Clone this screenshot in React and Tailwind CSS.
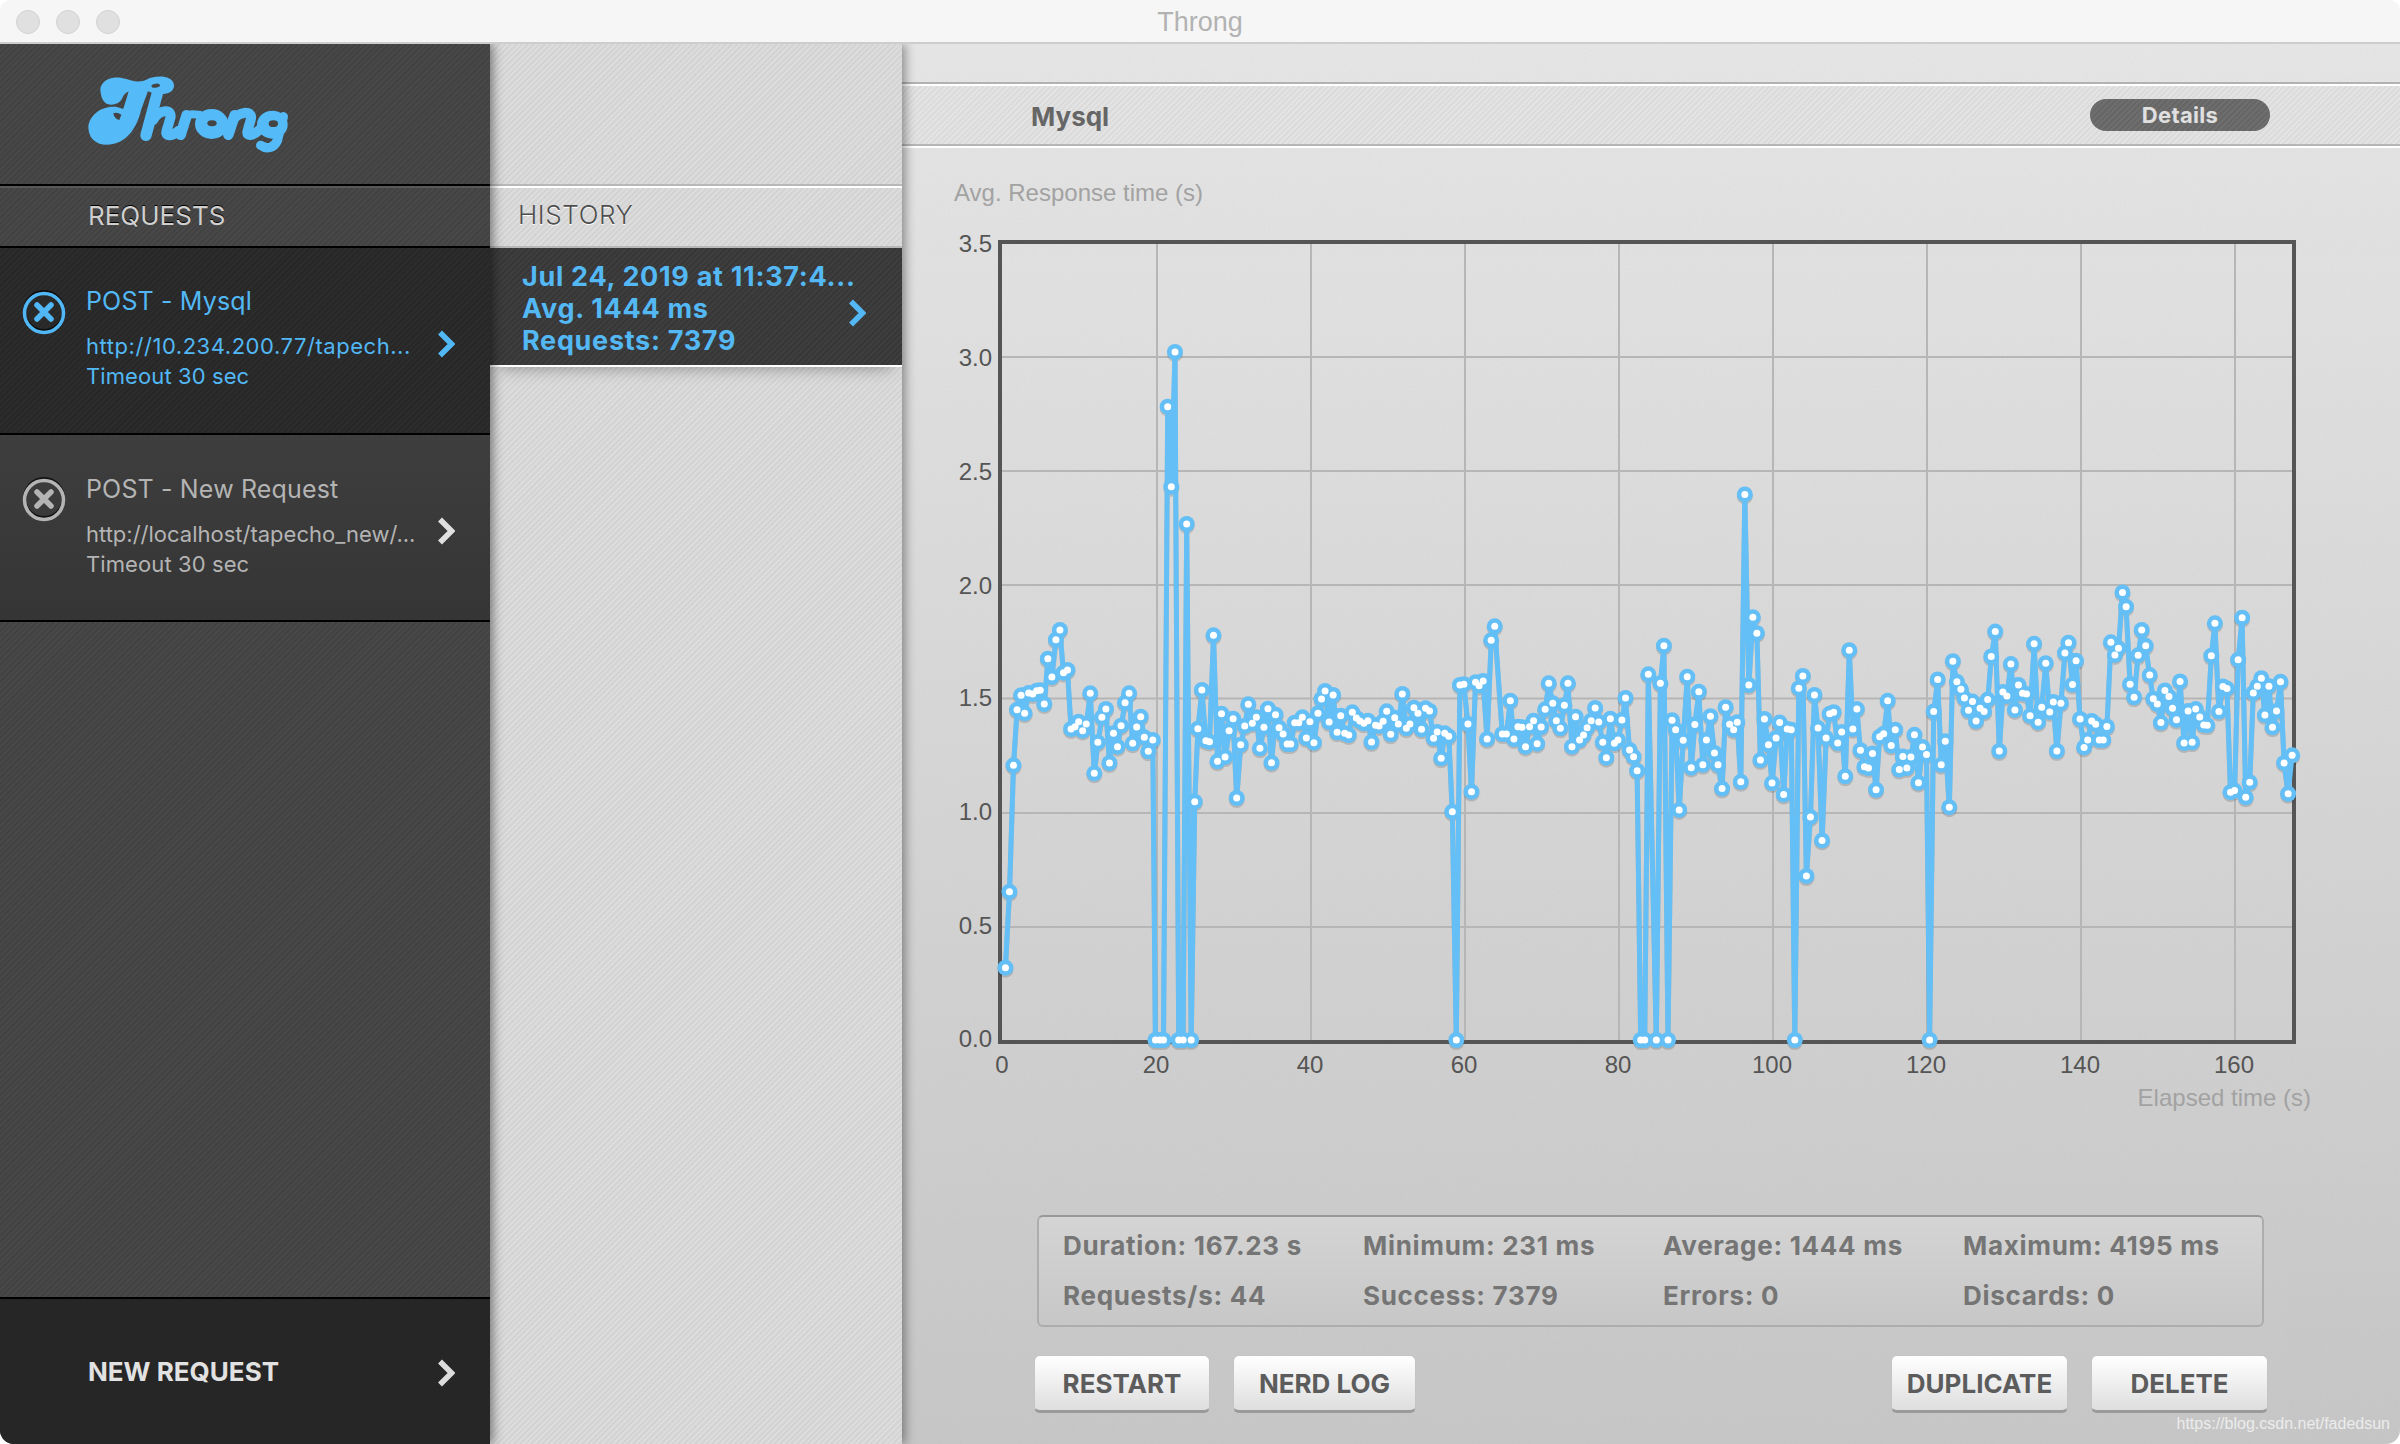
import React from "react";

const z4a = [[57,1043],[66,815],[75,436],[83,269],[92,226],[100,280],[109,219],[118,222],[127,212],[135,211],[144,252],[152,116],[161,171],[170,59],[179,30],[187,158],[196,150],[204,327],[213,320],[221,305],[230,332],[238,312],[247,220],[256,460],[264,367],[273,292],[282,267],[290,429],[299,340],[308,380],[316,317],[325,248],[334,220],[342,370],[351,321],[360,290],[368,352],[377,394],[387,360],[393,1260],[403,1260],[411,1260]];
const z4b = [[445,1260],[455,1260],[463,-288],[473,1260],[481,545],[488,326],[497,210],[506,362],[514,365],[523,46],[532,424],[541,281],[549,411],[558,332],[567,296],[575,534],[584,374],[593,318],[601,253],[610,310],[619,292],[627,385],[636,322],[645,266],[653,428],[662,284],[670,323],[679,342],[688,372],[696,372],[705,308],[714,308],[722,292],[731,354],[739,305],[748,368],[757,280],[765,237],[773,213],[782,306],[791,225],[800,337],[808,287],[817,340],[826,345],[834,277],[843,294],[851,303],[860,310],[869,302],[877,366],[886,316],[894,318],[903,304],[911,274],[920,343],[929,293],[937,312],[946,222],[955,325],[963,312],[972,263],[981,280],[989,328],[998,265],[1007,273],[1016,355],[1024,336],[1033,415],[1041,340],[1050,349],[1058,575],[1067,1260],[1075,195],[1084,193],[1093,312],[1101,515],[1110,187],[1118,197],[1127,183],[1136,357],[1145,61],[1153,19],[1170,342],[1179,342],[1188,242],[1196,357],[1205,320],[1214,322],[1222,380],[1231,320],[1240,302],[1248,371],[1257,321],[1266,268],[1274,190],[1283,250],[1291,302],[1300,325],[1309,256],[1317,190],[1326,380],[1334,290],[1343,360],[1352,345],[1360,323],[1369,302],[1378,264],[1386,306],[1395,367],[1403,413],[1412,296],[1421,370],[1429,360],[1438,300],[1446,234],[1455,390],[1464,410],[1472,452],[1480,1260],[1489,1260],[1497,163],[1515,1260],[1524,190],[1532,77]];
const z5 = [[18,1467],[27,658],[35,682],[43,885],[52,709],[61,548],[70,778],[78,669],[87,586],[96,771],[104,708],[113,648],[122,741],[130,771],[139,831],[147,625],[156,668],[165,682],[173,663],[181,814],[190,87],[199,569],[208,398],[217,438],[225,759],[234,655],[243,720],[251,817],[260,703],[268,664],[277,846],[285,680],[294,682],[302,1467],[311,577],[320,546],[328,1052],[337,903],[346,594],[354,678],[363,962],[372,703],[380,642],[389,638],[398,716],[407,688],[415,800],[424,481],[432,680],[441,630],[449,734],[458,776],[467,779],[476,742],[484,834],[492,700],[501,692],[510,609],[518,722],[527,682],[536,783],[544,750],[553,779],[562,751],[570,695],[579,816],[588,726],[597,745],[604,1467],[613,636],[622,555],[630,771],[639,711],[648,878],[656,509],[665,561],[674,580],[682,602],[691,633],[700,611],[708,660],[717,628],[726,636],[734,606],[742,497],[751,434],[760,736],[768,587],[777,597],[786,516],[795,632],[803,569],[812,590],[821,592],[829,647],[838,465],[847,663],[855,625],[864,514],[873,637],[881,612],[889,736],[898,615],[907,488],[915,462],[924,568],[932,508],[941,655],[950,727],[958,708],[967,660],[976,668],[984,708],[993,708],[1001,674],[1010,461],[1019,493],[1027,476],[1036,335],[1044,371],[1053,567],[1062,600],[1071,494],[1079,430],[1088,470],[1097,544],[1105,604],[1114,617],[1122,664],[1131,583],[1140,598],[1148,628],[1157,657],[1165,560],[1174,716],[1183,635],[1192,714],[1200,630],[1209,650],[1218,670],[1226,671],[1235,495],[1243,413],[1252,636],[1261,573],[1270,578],[1278,840],[1287,836],[1295,505],[1304,399],[1312,853],[1321,815],[1329,589],[1338,572],[1347,552],[1355,645],[1364,572],[1372,676],[1381,635],[1390,561],[1398,766],[1407,844],[1416,747]];
const f4 = ([x, y]) => [980 + x / 2.24, 620 + y / 3];
const f5 = ([x, y]) => [1660 + x / 2.24, 460 + y / 2.529];
const pts = [
  ...z4a.map(f4),
  [1167.7, 406.7], [1171.3, 486.7], [1175, 352],
  ...z4b.map(f4),
  ...z5.map(f5),
].map(([x, y]) => (y > 1038 ? [x, 1040] : [x, y]));
const line = pts.map(([x, y]) => `${x.toFixed(1)},${y.toFixed(1)}`).join(" ");

const Chevron = ({ className }) => (
  <svg viewBox="0 0 18 28" className={`w-[18px] h-[28px] shrink-0 ${className}`}>
    <path d="M3 2.5 L14.5 14 L3 25.5" fill="none" stroke="currentColor" strokeWidth="5.5" />
  </svg>
);

const XCircle = ({ className }) => (
  <svg viewBox="0 0 44 46" className={`w-[44px] h-[46px] shrink-0 ${className}`}>
    <circle cx="22" cy="22" r="19.5" fill="none" stroke="#000" strokeWidth="3" opacity=".7" />
    <circle cx="22" cy="24" r="19.5" fill="none" stroke="currentColor" strokeWidth="3.5" />
    <path d="M15 16 L29 30 M29 16 L15 30" stroke="currentColor" strokeWidth="5.5" strokeLinecap="round" />
  </svg>
);

const Logo = () => (
  <svg viewBox="0 0 780 390" className="w-[260px] h-[130px] block" fill="#55baf8" stroke="none">
    <path d="M122 128 C116 96 150 78 185 84 C215 90 235 102 262 88 C285 76 338 74 342 105 C344 134 300 138 270 126 C255 120 240 122 222 122 C205 122 192 128 185 148 C180 158 165 164 155 164 C135 164 125 150 122 128Z" />
    <path d="M85 230 C88 198 120 168 165 170 C172 170 185 176 190 176 L208 118 L266 118 L244 178 C228 245 192 284 140 284 C105 284 85 262 85 230Z" />
    <ellipse cx="287" cy="107" rx="13" ry="6" fill="#444" transform="rotate(-8 287 107)" />
    <path d="M160 190 C168 186 176 188 184 194 L178 210 C168 208 162 202 160 190Z" fill="#444" />
    <g fill="none" stroke="#55baf8" strokeLinecap="round">
      <path d="M292 130 L258 256" strokeWidth="34" />
      <path d="M280 210 C295 178 342 172 330 208 L319 245 C316 262 338 258 356 242" strokeWidth="30" />
      <path d="M380 196 L362 254" strokeWidth="32" />
      <path d="M372 210 C385 186 400 194 418 194" strokeWidth="24" />
      <path d="M524 196 L505 254" strokeWidth="32" />
      <path d="M516 214 C532 184 582 178 572 210 L562 245 C560 262 582 256 600 238" strokeWidth="30" />
      <path d="M670 200 L652 272 C642 296 618 298 602 286" strokeWidth="28" />
    </g>
    <ellipse cx="455" cy="222" rx="50" ry="45" />
    <ellipse cx="456" cy="220" rx="14" ry="9" fill="#444" />
    <ellipse cx="637" cy="224" rx="46" ry="42" />
    <ellipse cx="640" cy="221" rx="14" ry="10" fill="#444" />
  </svg>
);

const RequestItem = ({ active, title, url }) => (
  <div className={`relative h-[187px] border-b-2 border-black flex pl-[22px] pr-[35px] ${active ? "bg-[repeating-linear-gradient(135deg,#2c2c2c_0,#2c2c2c_2px,#272727_2px,#272727_4px)] text-[#52b8f5]" : "bg-[linear-gradient(#3e3e3e,#353535)] text-[#b4b4b4]"}`}>
    <XCircle className="mt-[41px]" />
    <div className={`ml-[20px] flex-1 min-w-0 ${active ? "pt-[36px]" : "pt-[37px]"}`}>
      <div className="text-[25px] leading-[34px] tracking-[0.15px]">{title}</div>
      <div className={`mt-[13px] text-[22px] leading-[30px] whitespace-nowrap ${active ? "tracking-[0.55px]" : ""}`}>{url}</div>
      <div className="text-[22px] leading-[30px] tracking-[0.1px]">Timeout 30 sec</div>
    </div>
    <Chevron className={active ? "mt-[82px] text-[#52b8f5]" : "mt-[82px] text-[#e0e0e0]"} />
  </div>
);

const Stat = ({ children }) => <div className="text-[26px] font-bold tracking-[0.7px] text-[#757575] leading-[50px] whitespace-nowrap">{children}</div>;

const Btn = ({ w, children }) => (
  <button className={`${w} h-[58px] rounded-[6px] border border-[#c4c4c4] border-b-[3px] border-b-[#9a9a9a] bg-[linear-gradient(#ffffff,#dedede)] text-[26px] font-bold text-[#5c5c5c]`}>{children}</button>
);

export default function App() {
  return (
    <div className="w-[2400px] h-[1444px] bg-white overflow-hidden flex flex-col font-['Inter',sans-serif]">
      <div className="h-[44px] shrink-0 bg-[#f6f6f6] border-b-2 border-[#cdcdcd] rounded-t-[10px] relative flex items-center justify-center text-[27px] text-[#b2b2b2]">
        <div className="absolute left-[16px] top-[10px] flex gap-[16px]">
          <div className="w-[24px] h-[24px] rounded-full bg-[#e0e0e0] border border-[#d2d2d2]" />
          <div className="w-[24px] h-[24px] rounded-full bg-[#e0e0e0] border border-[#d2d2d2]" />
          <div className="w-[24px] h-[24px] rounded-full bg-[#e0e0e0] border border-[#d2d2d2]" />
        </div>
        <span className="font-['Liberation_Sans',sans-serif] mt-[2px]">Throng</span>
      </div>
      <div className="flex-1 flex min-h-0 rounded-b-[14px] overflow-hidden">
        {/* Requests column */}
        <div className="w-[490px] shrink-0 relative z-20 flex flex-col shadow-[3px_0_10px_rgba(0,0,0,.45)] bg-[repeating-linear-gradient(135deg,#484848_0,#484848_2px,#424242_2px,#424242_4px)]">
          <div className="h-[142px] shrink-0 border-b-2 border-black pt-[6px] pl-[60px]">
            <Logo />
          </div>
          <div className="h-[62px] shrink-0 border-t-2 border-t-[#585858] border-b-2 border-black pl-[88px] pb-[3px] flex items-center text-[26px] text-[#cfcfcf] [text-shadow:0_-1px_0_#000]">REQUESTS</div>
          <RequestItem active title="POST - Mysql" url="http://10.234.200.77/tapech..." />
          <RequestItem title="POST - New Request" url="http://localhost/tapecho_new/..." />
          <div className="flex-1" />
          <div className="h-[147px] shrink-0 border-t-2 border-black bg-[#262626] flex items-center pl-[88px] pr-[35px] justify-between text-[26px] font-bold text-[#e2e2e2]">
            <span>NEW REQUEST</span>
            <Chevron className="text-[#dcdcdc] mt-[2px]" />
          </div>
        </div>
        {/* History column */}
        <div className="w-[412px] shrink-0 relative z-10 flex flex-col shadow-[3px_0_10px_rgba(0,0,0,.4)] bg-[repeating-linear-gradient(135deg,#dcdcdc_0,#dcdcdc_2px,#d3d3d3_2px,#d3d3d3_4px)]">
          <div className="h-[140px] shrink-0" />
          <div className="h-[64px] shrink-0 border-t-2 border-t-[#b8b8b8] border-b-2 border-b-[#b8b8b8] pl-[28px] pb-[3px] flex items-center text-[26px] font-light tracking-[0.6px] text-[#4e4e4e] [text-shadow:0_1px_0_#fff] relative">
            <div className="absolute left-0 right-0 top-0 h-[2px] bg-white" />
            HISTORY
          </div>
          <div className="h-[119px] shrink-0 border-b-2 border-white bg-[repeating-linear-gradient(135deg,#3e3e3e_0,#3e3e3e_2px,#373737_2px,#373737_4px)] pl-[32px] flex items-center text-[27px] font-bold tracking-[0.7px] text-[#53b8f4] shadow-[0_12px_14px_-10px_rgba(0,0,0,.3)]">
            <div className="leading-[32px] whitespace-nowrap mt-[5px] w-[326px]">
              <div>Jul 24, 2019 at 11:37:4...</div>
              <div>Avg. 1444 ms</div>
              <div>Requests: 7379</div>
            </div>
            <Chevron className="text-[#53b8f4] mt-[12px]" />
          </div>
        </div>
        {/* Detail column */}
        <div className="flex-1 min-w-0 relative bg-[linear-gradient(#e6e6e6,#c6c6c6)]">
          <svg className="absolute inset-0 w-full h-full opacity-[.06]">
            <filter id="grain">
              <feTurbulence type="fractalNoise" baseFrequency=".55" numOctaves="2" />
              <feColorMatrix type="saturate" values="0" />
            </filter>
            <rect width="100%" height="100%" filter="url(#grain)" />
          </svg>
          <div className="relative flex flex-col h-full">
            <div className="h-[38px] shrink-0" />
            <div className="h-[64px] shrink-0 border-t-2 border-t-[#b2b2b2] border-b-2 border-b-[#b6b6b6] relative flex items-center justify-between pl-[129px] pr-[130px] bg-[repeating-linear-gradient(135deg,#e3e3e3_0,#e3e3e3_2px,#dbdbdb_2px,#dbdbdb_4px)]">
              <div className="absolute left-0 right-0 top-0 h-[2px] bg-white" />
              <div className="absolute left-0 right-0 -bottom-[4px] h-[2px] bg-white" />
              <span className="text-[26px] font-bold text-[#666] mt-[4px]">Mysql</span>
              <div className="w-[180px] h-[32px] mt-[2px] rounded-full bg-[repeating-linear-gradient(135deg,#6e6e6e_0,#6e6e6e_2px,#666666_2px,#666666_4px)] flex items-center justify-center text-[22px] font-bold tracking-[0.3px] text-[#e0e0e0]">Details</div>
            </div>
            <div className="ml-[52px] mt-[33px] h-[28px] leading-[28px] text-[24px] text-[#a2a2a2] font-['Liberation_Sans',sans-serif]">Avg. Response time (s)</div>
            <svg viewBox="902 207 1498 1008" className="w-[1498px] h-[1008px] shrink-0 block font-['Liberation_Sans',sans-serif]">
              {[471, 585, 698.5, 813, 927, 357].map((y) => (
                <line key={y} x1="1000" x2="2294" y1={y} y2={y} stroke="#b6b6b6" strokeWidth="2" />
              ))}
              {[1157, 1311, 1465, 1619, 1773, 1927, 2081, 2235].map((x) => (
                <line key={x} x1={x} x2={x} y1="242" y2="1042" stroke="#b6b6b6" strokeWidth="2" />
              ))}
              <rect x="1000" y="242" width="1294" height="800" fill="none" stroke="#555" strokeWidth="4" />
              {[["3.5", 244], ["3.0", 358], ["2.5", 472], ["2.0", 586], ["1.5", 698], ["1.0", 812], ["0.5", 926], ["0.0", 1039]].map(([t, y]) => (
                <text key={t} x="992" y={y + 8} textAnchor="end" fontSize="24" fill="#555">{t}</text>
              ))}
              {[0, 20, 40, 60, 80, 100, 120, 140, 160].map((t, i) => (
                <text key={t} x={1002 + 155 * i - (i > 0 ? i : 0)} y="1073" textAnchor="middle" fontSize="24" fill="#555">{t}</text>
              ))}
              <text x="2311" y="1106" textAnchor="end" fontSize="24" fill="#a2a2a2">Elapsed time (s)</text>
              <g transform="translate(0 2)" opacity=".14">
                <polyline points={line} fill="none" stroke="#000" strokeWidth="5" />
                {pts.map(([x, y], i) => <circle key={i} cx={x} cy={y} r="8" fill="#000" />)}
              </g>
              <polyline points={line} fill="none" stroke="#63bff5" strokeWidth="5" strokeLinejoin="round" />
              {pts.map(([x, y], i) => <circle key={i} cx={x} cy={y} r="8" fill="#63bff5" />)}
              {pts.map(([x, y], i) => <circle key={i} cx={x} cy={y} r="3.5" fill="#fff" />)}
            </svg>
            <div className="ml-[135px] w-[1227px] h-[112px] shrink-0 rounded-[6px] border-2 border-[#adadad] border-t-[#989898] bg-[linear-gradient(#d4d4d4,#c7c7c7)] pl-[24px] py-[4px] grid grid-cols-[300px_300px_300px_300px]">
              <Stat>Duration: 167.23 s</Stat>
              <Stat>Minimum: 231 ms</Stat>
              <Stat>Average: 1444 ms</Stat>
              <Stat>Maximum: 4195 ms</Stat>
              <Stat>Requests/s: 44</Stat>
              <Stat>Success: 7379</Stat>
              <Stat>Errors: 0</Stat>
              <Stat>Discards: 0</Stat>
            </div>
            <div className="ml-[132px] mr-[132px] mt-[28px] flex relative">
              <div className="flex gap-[23px]">
                <Btn w="w-[176px]">RESTART</Btn>
                <Btn w="w-[183px]">NERD LOG</Btn>
              </div>
              <div className="flex gap-[23px] ml-auto">
                <Btn w="w-[177px]">DUPLICATE</Btn>
                <Btn w="w-[177px]">DELETE</Btn>
              </div>
              <div className="absolute right-[-122px] top-[57px] text-[16px] leading-[24px] text-[#ececec] font-['Liberation_Sans',sans-serif] whitespace-nowrap">https://blog.csdn.net/fadedsun</div>
            </div>
          </div>
        </div>
      </div>
    </div>
  );
}
